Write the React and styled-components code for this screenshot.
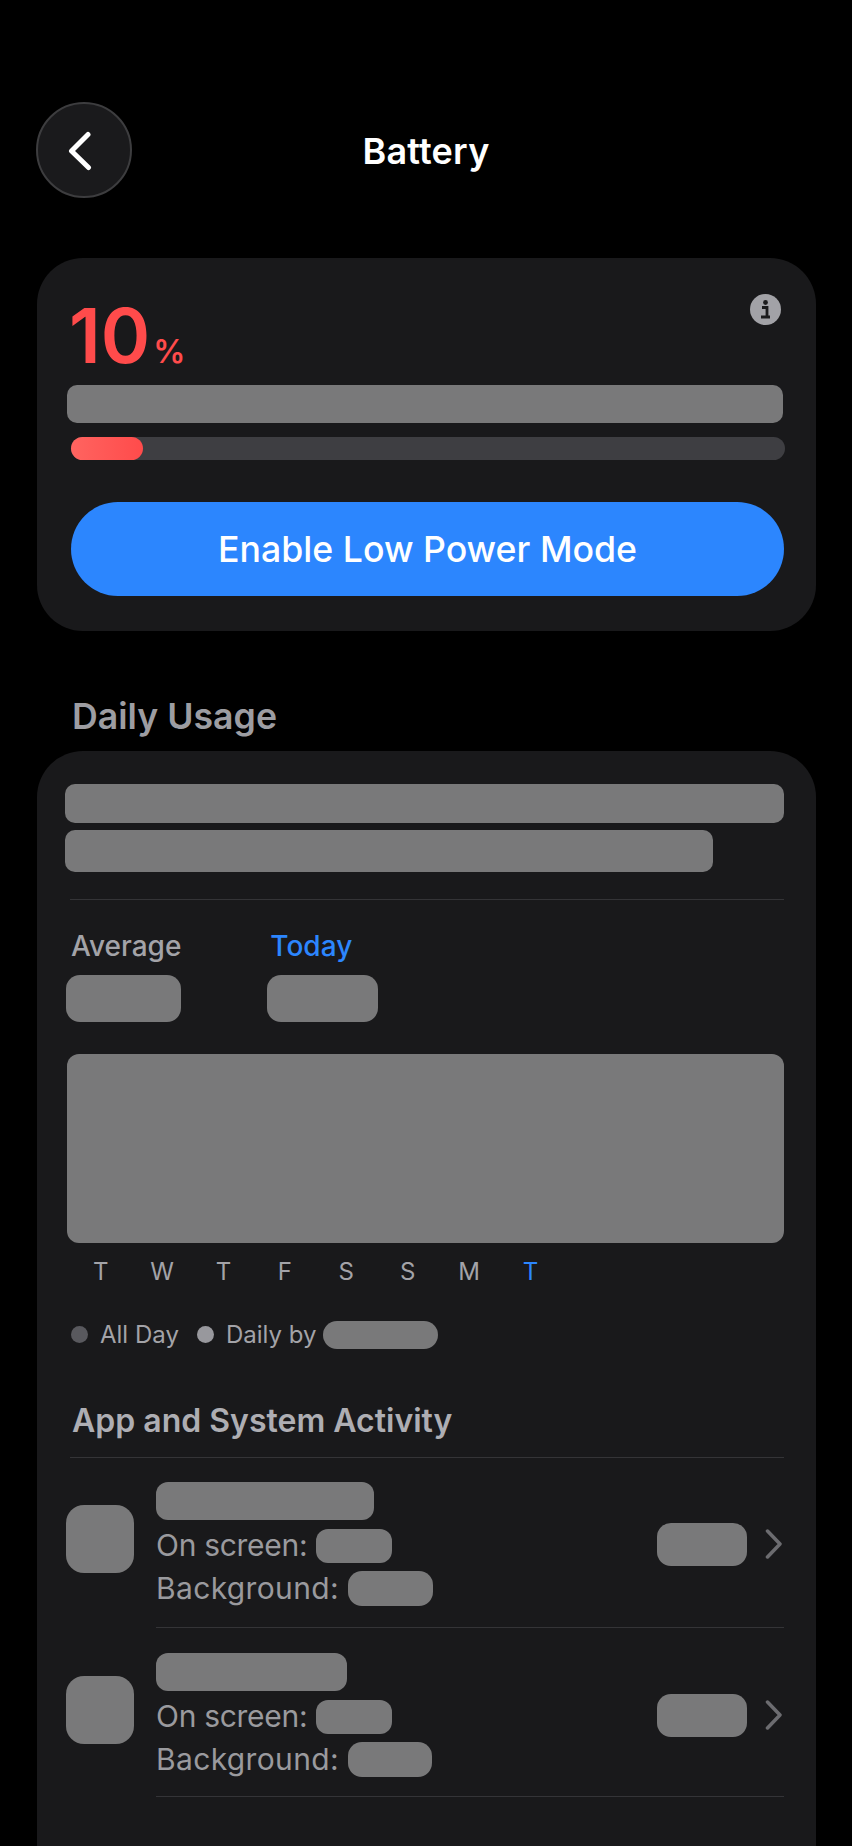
import React from "react"
import styled, { createGlobalStyle } from "styled-components"

const GlobalStyle = createGlobalStyle`
    html, body {
        margin: 0;
        padding: 0;
        background: #000;
    }
    body {
        font-family: Inter, "Liberation Sans", sans-serif;
    }
`

const Page = styled.div`
    box-sizing: border-box;
    width: 852px;
    height: 1846px;
    padding-top: 102px;
    display: flex;
    flex-direction: column;
    overflow: hidden;
    background: #000;
`

const Header = styled.header`
    display: grid;
    grid-template-columns: 97px 1fr 97px;
    align-items: center;
    margin: 0 36px 60px;
`

const BackButton = styled.button`
    width: 96px;
    height: 96px;
    padding: 0;
    border-radius: 50%;
    border: 2px solid #3d3d3f;
    background: #1a1a1c;
    display: flex;
    align-items: center;
    justify-content: center;
    box-sizing: border-box;
`

const Title = styled.h1`
    margin: 2px 0 0;
    text-align: center;
    color: #fff;
    font-size: 36px;
    font-weight: 600;
    letter-spacing: 0.2px;
    line-height: 42px;
`

const Card = styled.section`
    box-sizing: border-box;
    margin: 0 36px 0 37px;
    background: #19191b;
    border-radius: 46px;
`

const BatteryCard = styled(Card)`
    height: 373px;
    padding: 36px 32px 0 30px;
`

const LevelRow = styled.div`
    display: flex;
    justify-content: space-between;
    align-items: flex-start;
    height: 80px;
    margin-bottom: 11px;
`

const Level = styled.div`
    color: #ff4b4b;
    font-size: 75px;
    font-weight: 600;
    line-height: 84px;
    margin-left: 2px;
`

const Percent = styled.span`
    font-size: 32px;
    margin-left: 3px;
`

const InfoIcon = styled.svg`
    width: 31px;
    height: 31px;
    margin-right: 3px;
    flex: none;
`

const Blank = styled.div`
    flex: none;
    width: ${(p) => p.$w}px;
    height: ${(p) => p.$h}px;
    border-radius: ${(p) => p.$r || 10}px;
    background: #79797a;
`

const Track = styled.div`
    height: 23px;
    margin: 14px -1px 0 4px;
    border-radius: 12px;
    background: #3e3e42;
`

const Fill = styled.div`
    height: 100%;
    border-radius: 12px;
    background: linear-gradient(90deg, #ff6460, #ff4b4b);
`

const PowerButton = styled.button`
    display: block;
    width: 713px;
    height: 94px;
    margin: 42px 0 0 4px;
    padding: 0;
    border: 0;
    border-radius: 47px;
    background: #2c86fe;
    color: #fff;
    font-family: inherit;
    font-size: 35.7px;
    font-weight: 500;
`

const SectionLabel = styled.h2`
    margin: 65px 0 15px 72px;
    color: #9d9da2;
    font-size: 35.7px;
    font-weight: 600;
    line-height: 40px;
`

const UsageCard = styled(Card)`
    flex: 1;
    padding: 33px 32px 0 28px;
    border-radius: 46px 46px 0 0;
`

const Rule = styled.div`
    height: 1px;
    margin-left: ${(p) => p.$left || 5}px;
    background: #343437;
`

const Summary = styled.div`
    display: flex;
    gap: 86px;
    margin-top: 30px;
`

const SummaryItem = styled.div`
    display: flex;
    flex-direction: column;
    gap: 13px;
`

const SummaryLabel = styled.span`
    margin-left: ${(p) => p.$left}px;
    color: ${(p) => (p.$active ? "#2c86fe" : "#a3a3a8")};
    font-size: 28px;
    font-weight: 500;
    line-height: 32px;
`

const DayRow = styled.div`
    display: grid;
    grid-template-columns: repeat(8, 61.4px);
    margin: 14px 0 0 5px;
`

const Day = styled.span`
    text-align: center;
    color: ${(p) => (p.$active ? "#2c86fe" : "#a3a3a8")};
    font-size: 24px;
    font-weight: 400;
    line-height: 30px;
`

const Legend = styled.div`
    display: flex;
    align-items: center;
    margin: 33px 0 0 6px;
    color: #a3a3a8;
    font-size: 24px;
`

const Dot = styled.span`
    width: 17px;
    height: 17px;
    border-radius: 50%;
    margin-right: 12px;
    background: ${(p) => p.$color};
`

const LegendText = styled.span`
    margin-right: ${(p) => p.$gap}px;
`

const ActivityTitle = styled.h3`
    margin: 51px 0 0 7px;
    color: #aeaeb3;
    font-size: 32px;
    font-weight: 600;
    line-height: 42px;
`

const ActivityRule = styled(Rule)`
    margin-top: 15px;
`

const AppRow = styled.div`
    display: flex;
    align-items: flex-start;
    gap: 22px;
    margin-left: 1px;
`

const AppIcon = styled(Blank)`
    margin-top: ${(p) => p.$top}px;
`

const AppBody = styled.div`
    box-sizing: border-box;
    flex: 1;
    height: 169.5px;
    display: flex;
    align-items: center;
    justify-content: space-between;
    padding: ${(p) => p.$top}px 2px 0 0;
    border-bottom: 1px solid #343437;
`

const AppDetails = styled.div`
    display: flex;
    flex-direction: column;
    gap: 8px;
`

const AppLine = styled.div`
    display: flex;
    align-items: center;
    gap: 9px;
    color: #9a9a9e;
    font-size: 30px;
    letter-spacing: ${(p) => p.$track}px;
    line-height: 35px;
`

const AppValue = styled.div`
    display: flex;
    align-items: center;
    gap: 18px;
`

const apps = [
    { name: 218, screen: 76, background: 85, top: 4, iconTop: 47 },
    { name: 191, screen: 76, background: 84, top: 7, iconTop: 48 },
]

const days = ["T", "W", "T", "F", "S", "S", "M", "T"]

export default function App() {
    return (
        <Page>
            <GlobalStyle />
            <Header>
                <BackButton aria-label="Back">
                    <svg width="32" height="48" viewBox="0 0 32 48" fill="none">
                        <path d="M20 8.5 L3.5 25 L20.5 41.5" stroke="#fff" strokeWidth="5" strokeLinecap="round" strokeLinejoin="round" />
                    </svg>
                </BackButton>
                <Title>Battery</Title>
            </Header>

            <BatteryCard>
                <LevelRow>
                    <Level>10<Percent>%</Percent></Level>
                    <InfoIcon viewBox="0 0 31 31">
                        <circle cx="15.5" cy="15.5" r="15.5" fill="#a2a2a7" />
                        <circle cx="15.5" cy="8.5" r="2.4" fill="#1c1c1e" />
                        <path d="M12 13.5h5v8.5M11 23h9" stroke="#1c1c1e" strokeWidth="2.8" fill="none" />
                    </InfoIcon>
                </LevelRow>
                <Blank $w={716} $h={38} />
                <Track>
                    <Fill style={{ width: `${(72 / 713) * 100}%` }} />
                </Track>
                <PowerButton>Enable Low Power Mode</PowerButton>
            </BatteryCard>

            <SectionLabel>Daily Usage</SectionLabel>
            <UsageCard>
                <Blank $w={719} $h={39} />
                <Blank $w={648} $h={42} style={{ marginTop: 7 }} />
                <Rule style={{ marginTop: 27 }} />
                <Summary>
                    <SummaryItem>
                        <SummaryLabel $left={6}>Average</SummaryLabel>
                        <Blank $w={115} $h={47} $r={14} style={{ marginLeft: 1 }} />
                    </SummaryItem>
                    <SummaryItem>
                        <SummaryLabel $left={3} $active>Today</SummaryLabel>
                        <Blank $w={111} $h={47} $r={14} />
                    </SummaryItem>
                </Summary>
                <Blank $w={717} $h={189} $r={12} style={{ margin: "32px 0 0 2px" }} />
                <DayRow>
                    {days.map((d, i) => (
                        <Day key={i} $active={i === 7}>{d}</Day>
                    ))}
                </DayRow>
                <Legend>
                    <Dot $color="#59595e" />
                    <LegendText $gap={18}>All Day</LegendText>
                    <Dot $color="#98989d" />
                    <LegendText $gap={7}>Daily by</LegendText>
                    <Blank $w={115} $h={28} $r={14} />
                </Legend>
                <ActivityTitle>App and System Activity</ActivityTitle>
                <ActivityRule />
                {apps.map((a, i) => (
                    <AppRow key={i}>
                        <AppIcon $w={68} $h={68} $r={18} $top={a.iconTop} />
                        <AppBody $top={a.top}>
                            <AppDetails>
                                <Blank $w={a.name} $h={38} $r={12} />
                                <AppLine $track={-0.3}>On screen: <Blank $w={a.screen} $h={34} $r={12} /></AppLine>
                                <AppLine $track={0.35}>Background: <Blank $w={a.background} $h={35} $r={14} /></AppLine>
                            </AppDetails>
                            <AppValue>
                                <Blank $w={90} $h={43} $r={14} />
                                <svg width="17" height="30" viewBox="0 0 17 30" fill="none">
                                    <path d="M2.5 2 L15 15 L2.5 28" stroke="#6c6c70" strokeWidth="3.5" strokeLinecap="round" strokeLinejoin="round" />
                                </svg>
                            </AppValue>
                        </AppBody>
                    </AppRow>
                ))}
            </UsageCard>
        </Page>
    )
}
